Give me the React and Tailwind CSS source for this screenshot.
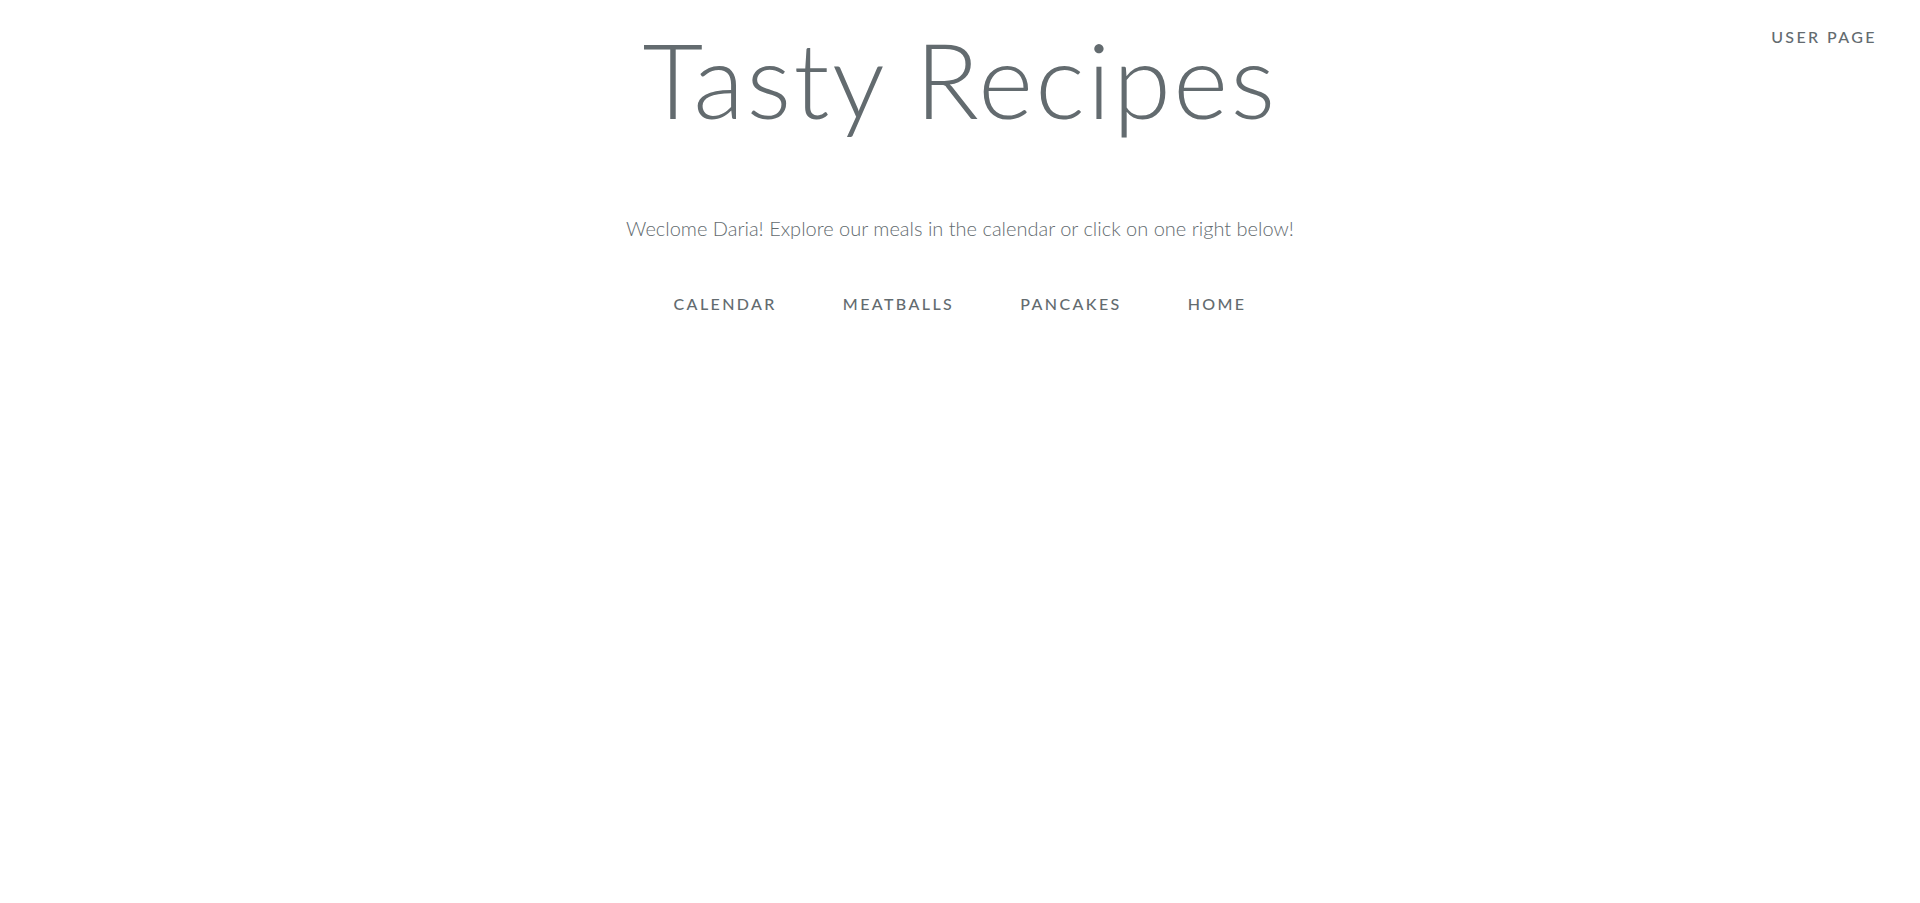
export default function App() {
  const links = ["Calendar", "Meatballs", "Pancakes", "Home"];

  return (
    <div className="min-h-screen bg-white text-[#636b6f] font-['Lato','Liberation_Sans',sans-serif]">
      {/* Header: title centered, user link in the corner */}
      <div className="grid grid-cols-[1fr_auto_1fr]">
        <div />
        <h1 className="pt-[26px] text-[105px] leading-none font-light tracking-[2.4px]">
          Tasty Recipes
        </h1>
        <div className="flex justify-end items-start pt-[25px] pr-[12px]">
          <a
            href="#"
            className="px-[31px] text-[16px] font-medium uppercase tracking-[2.4px] text-[#636b6f]"
          >
            User page
          </a>
        </div>
      </div>

      {/* Welcome message */}
      <p className="mt-[82px] text-center text-[20px] font-light">
        Weclome Daria! Explore our meals in the calendar or click on one right below!
      </p>

      {/* Navigation links */}
      <nav className="mt-[49px] flex justify-center">
        {links.map((link) => (
          <a
            key={link}
            href="#"
            className="px-[33px] text-[16px] font-medium uppercase tracking-[2.4px] text-[#636b6f]"
          >
            {link}
          </a>
        ))}
      </nav>
    </div>
  );
}
